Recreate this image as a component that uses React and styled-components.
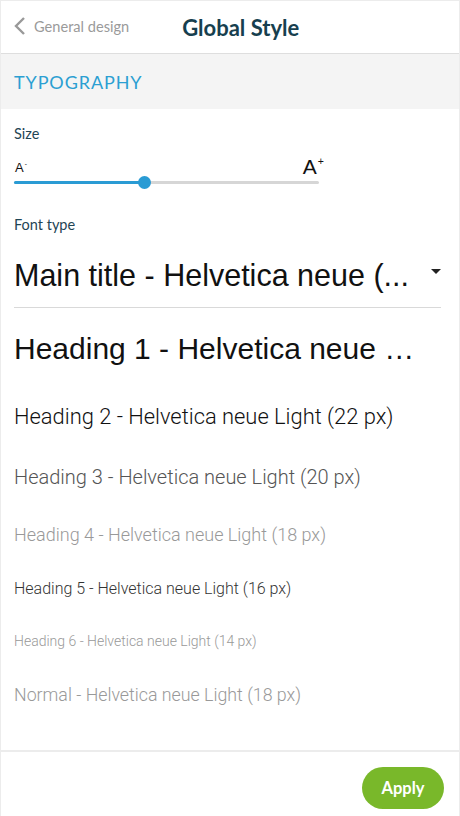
import styled, { createGlobalStyle } from "styled-components";

const GlobalStyle = createGlobalStyle`
  html, body {
    margin: 0;
    padding: 0;
    background: #fff;
  }
  * {
    box-sizing: border-box;
  }
`;

const headings = [
  { label: "Heading 1 - Helvetica neue …", size: 30, color: "#111", gap: 24, light: false },
  { label: "Heading 2 - Helvetica neue Light (22 px)", size: 21.9, color: "#111", gap: 37, light: true },
  { label: "Heading 3 - Helvetica neue Light (20 px)", size: 20, color: "#555", gap: 37, light: true },
  { label: "Heading 4 - Helvetica neue Light (18 px)", size: 18, color: "#999", gap: 36, light: true },
  { label: "Heading 5 - Helvetica neue Light (16 px)", size: 16, color: "#333", gap: 35, light: true },
  { label: "Heading 6 - Helvetica neue Light (14 px)", size: 14, color: "#999", gap: 34, light: true },
  { label: "Normal - Helvetica neue Light (18 px)", size: 17.8, color: "#999", gap: 36, light: true },
];

function App() {
  return (
    <>
      <GlobalStyle />
      <Frame>
        <Header>
          <BackLink>
            <svg width="12" height="20" viewBox="0 0 12 20">
              <path d="M10 2 L2 10 L10 18" fill="none" stroke="#999" strokeWidth="2.4" />
            </svg>
            General design
          </BackLink>
          <Title>Global Style</Title>
        </Header>

        <SectionBand>TYPOGRAPHY</SectionBand>

        <Content>
          <Label>Size</Label>
          <SizeRow>
            <SizeMarks>
              <SmallA>
                A<Sign>-</Sign>
              </SmallA>
              <BigA>
                A<Sign>+</Sign>
              </BigA>
            </SizeMarks>
            <Track>
              <Fill style={{ width: `${(130 / 304) * 100}%` }} />
              <Thumb style={{ left: `${(130 / 304) * 100}%` }} />
            </Track>
          </SizeRow>

          <Label>Font type</Label>
          <Select>
            <SelectText>Main title - Helvetica neue (...</SelectText>
            <Caret />
          </Select>

          <HeadingList>
            {headings.map((h) => (
              <HeadingItem
                key={h.label}
                $size={h.size}
                $color={h.color}
                $gap={h.gap}
                $light={h.light}
              >
                {h.label}
              </HeadingItem>
            ))}
          </HeadingList>
        </Content>

        <Footer>
          <ApplyButton>Apply</ApplyButton>
        </Footer>
      </Frame>
    </>
  );
}

const Frame = styled.div`
  width: 460px;
  height: 816px;
  border: 1px solid #ececec;
  border-bottom: none;
  display: flex;
  flex-direction: column;
  font-family: Lato, "Open Sans", sans-serif;
  overflow: hidden;
`;

const Header = styled.div`
  height: 53px;
  flex-shrink: 0;
  display: flex;
  align-items: center;
  padding-left: 13px;
  gap: 53px;
  border-bottom: 1px solid #dedede;
`;

const BackLink = styled.div`
  display: flex;
  align-items: center;
  gap: 8px;
  color: #9a9a9a;
  font-size: 14.6px;
  padding-bottom: 2px;
`;

const Title = styled.div`
  color: #173f4f;
  font-size: 22px;
  font-weight: 700;
`;

const SectionBand = styled.div`
  height: 55px;
  flex-shrink: 0;
  background: #f4f4f4;
  color: #2b9fd2;
  font-size: 18px;
  letter-spacing: 0.9px;
  display: flex;
  align-items: center;
  padding-left: 13px;
`;

const Content = styled.div`
  flex: 1;
  padding: 16px 18px 0 13px;
`;

const Label = styled.div`
  color: #1f4555;
  font-size: 14.5px;
  line-height: 17px;
`;

const SizeRow = styled.div`
  width: 305px;
  margin: 8px 0 32px;
`;

const SizeMarks = styled.div`
  display: flex;
  justify-content: space-between;
  align-items: flex-end;
  height: 26px;
  font-family: "Helvetica Neue", "Liberation Sans", Arial, sans-serif;
  color: #111;
`;

const Sign = styled.span`
  font-size: 0.5em;
  vertical-align: top;
  line-height: 1;
  margin-left: 1px;
`;

const SmallA = styled.span`
  font-size: 13px;
  line-height: 13px;
  padding-left: 1px;
  margin-bottom: 2px;
`;

const BigA = styled.span`
  font-size: 21px;
  line-height: 22px;
  margin-right: -5px;
  margin-bottom: -2px;
`;

const Track = styled.div`
  position: relative;
  height: 3px;
  margin-top: 5px;
  background: #d6d6d6;
  border-radius: 2px;
`;

const Fill = styled.div`
  height: 100%;
  background: #2a9bd4;
  border-radius: 2px;
`;

const Thumb = styled.div`
  position: absolute;
  top: 50%;
  width: 13px;
  height: 13px;
  margin: -6.5px 0 0 -6.5px;
  border-radius: 50%;
  background: #2a9bd4;
`;

const Select = styled.div`
  display: flex;
  align-items: center;
  justify-content: space-between;
  height: 60px;
  margin-top: 15px;
  border-bottom: 1px solid #d9d9d9;
  padding-bottom: 4px;
`;

const SelectText = styled.div`
  font-family: "Helvetica Neue", "Liberation Sans", Arial, sans-serif;
  font-size: 30.5px;
  color: #111;
  white-space: nowrap;
`;

const Caret = styled.span`
  width: 0;
  height: 0;
  border-left: 5px solid transparent;
  border-right: 5px solid transparent;
  border-top: 5px solid #222;
  margin-top: -8px;
`;

const HeadingList = styled.div`
  display: flex;
  flex-direction: column;
`;

const HeadingItem = styled.div`
  font-family: ${(p) =>
    p.$light
      ? `Roboto, "Helvetica Neue", sans-serif`
      : `"Helvetica Neue", "Liberation Sans", Arial, sans-serif`};
  font-weight: ${(p) => (p.$light ? 300 : 400)};
  font-size: ${(p) => p.$size}px;
  color: ${(p) => p.$color};
  white-space: nowrap;
  margin-top: ${(p) => p.$gap}px;
  line-height: 1.15;
`;

const Footer = styled.div`
  height: 66px;
  flex-shrink: 0;
  border-top: 2px solid #ececec;
  display: flex;
  align-items: center;
  justify-content: flex-end;
  padding: 8px 15px 0 0;
`;

const ApplyButton = styled.button`
  width: 82px;
  height: 42px;
  border: none;
  border-radius: 21px;
  background: #79b82a;
  color: #fff;
  font-family: Lato, sans-serif;
  font-size: 16.5px;
  font-weight: 700;
  cursor: pointer;
`;

export default App;
